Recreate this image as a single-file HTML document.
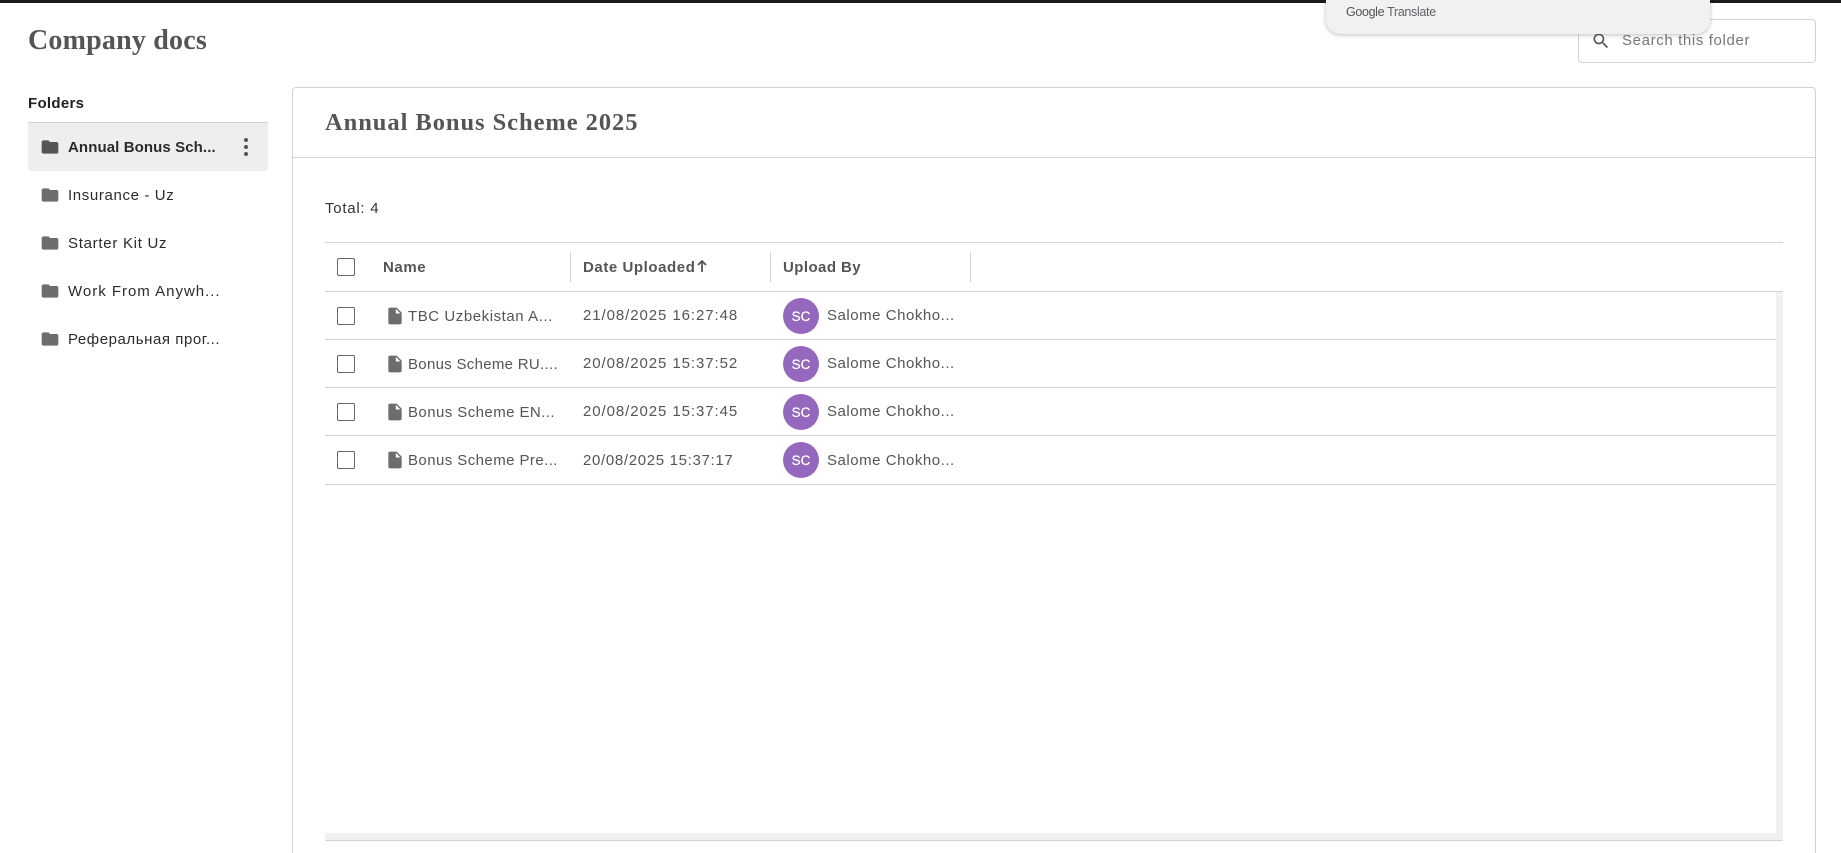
<!DOCTYPE html>
<html>
<head>
<meta charset="utf-8">
<title>Company docs</title>
<style>
html,body{margin:0;padding:0;width:1841px;height:853px;overflow:hidden;background:#fff}
body{position:relative;font-family:"Liberation Sans","Noto Sans CJK SC",sans-serif;color:#333}
.a{position:absolute}
.t{position:absolute;white-space:nowrap;line-height:20px;height:20px;font-size:15px;letter-spacing:.3px}
.s{font-family:"Liberation Serif","Noto Serif CJK SC",serif;font-weight:700;color:#555;white-space:nowrap;position:absolute}
.l{position:absolute;background:#d2d2d2;height:1px}
.v{position:absolute;background:#d2d2d2;width:1px;top:252px;height:30px}
.cb{position:absolute;left:337px;width:16px;height:16px;border:1px solid #666;border-radius:2px;background:#fff}
.f{position:absolute;left:40px;width:20px;height:20px;fill:#6d6d6d}
.fi{position:absolute;left:385px;width:20px;height:20px;fill:#6d6d6d}
.av{position:absolute;left:783px;width:36px;height:36px;border-radius:50%;background:#9368bd;color:#fff;font-size:13.5px;line-height:37px;text-align:center;-webkit-text-stroke:.25px #fff}
.fn{color:#2b2b2b;left:68px}
.c{color:#555}
.h{font-weight:700;color:#555;top:258px}
.d{position:absolute;left:244px;width:4px;height:4px;border-radius:50%;background:#555}
</style>
</head>
<body>
<div class="a" style="left:0;top:0;width:1841px;height:3px;background:#1a1a1a"></div>

<div class="s" style="left:28px;top:24px;font-size:28px;line-height:34px;letter-spacing:.2px">Company docs</div>

<!-- search -->
<div class="a" style="left:1578px;top:19px;width:236px;height:42px;border:1px solid #d2d2d2;border-radius:4px"></div>
<svg class="a" style="left:1591px;top:31px;width:20px;height:20px;fill:#555" viewBox="0 0 24 24"><path d="M15.5 14h-.79l-.28-.27A6.47 6.47 0 0 0 16 9.5 6.5 6.5 0 1 0 9.5 16c1.61 0 3.09-.59 4.23-1.57l.27.28v.79l5 4.99L20.49 19l-4.99-5zm-6 0C7.01 14 5 11.99 5 9.5S7.01 5 9.5 5 14 7.01 14 9.5 11.99 14 9.5 14z"/></svg>
<div class="t" style="left:1622px;top:31px;color:#777;letter-spacing:.63px">Search this folder</div>

<!-- translate popup -->
<div class="a" style="left:1326px;top:-20px;width:384px;height:54px;background:#f1f1f1;border-radius:0 0 14px 14px;box-shadow:0 1px 4px rgba(60,64,67,.35)"></div>
<div class="a" style="left:1346px;top:4px;height:16px;line-height:16px;font-size:12.5px;color:#5f6368;white-space:nowrap;letter-spacing:-.33px"><span style="letter-spacing:-.35px;color:#555">Google</span> <span>Translate</span></div>

<!-- sidebar -->
<div class="t" style="left:28px;top:94px;font-weight:700;color:#222;letter-spacing:.3px">Folders</div>
<div class="l" style="left:28px;top:122px;width:240px"></div>
<div class="a" style="left:28px;top:123px;width:240px;height:48px;background:#eee;border-radius:0 0 4px 4px"></div>

<svg class="f" style="top:137px;fill:#555" viewBox="0 0 24 24"><path d="M10 4H4c-1.1 0-2 .9-2 2v12c0 1.1.9 2 2 2h16c1.1 0 2-.9 2-2V8c0-1.1-.9-2-2-2h-8l-2-2z"/></svg>
<div class="t fn" style="top:138px;font-weight:700;letter-spacing:.1px">Annual Bonus Sch...</div>
<div class="d" style="top:138px"></div>
<div class="d" style="top:145px"></div>
<div class="d" style="top:152px"></div>

<svg class="f" style="top:185px" viewBox="0 0 24 24"><path d="M10 4H4c-1.1 0-2 .9-2 2v12c0 1.1.9 2 2 2h16c1.1 0 2-.9 2-2V8c0-1.1-.9-2-2-2h-8l-2-2z"/></svg>
<div class="t fn" style="top:186px;letter-spacing:.63px">Insurance - Uz</div>
<svg class="f" style="top:233px" viewBox="0 0 24 24"><path d="M10 4H4c-1.1 0-2 .9-2 2v12c0 1.1.9 2 2 2h16c1.1 0 2-.9 2-2V8c0-1.1-.9-2-2-2h-8l-2-2z"/></svg>
<div class="t fn" style="top:234px;letter-spacing:.72px">Starter Kit Uz</div>
<svg class="f" style="top:281px" viewBox="0 0 24 24"><path d="M10 4H4c-1.1 0-2 .9-2 2v12c0 1.1.9 2 2 2h16c1.1 0 2-.9 2-2V8c0-1.1-.9-2-2-2h-8l-2-2z"/></svg>
<div class="t fn" style="top:282px;letter-spacing:.99px">Work From Anywh...</div>
<svg class="f" style="top:329px" viewBox="0 0 24 24"><path d="M10 4H4c-1.1 0-2 .9-2 2v12c0 1.1.9 2 2 2h16c1.1 0 2-.9 2-2V8c0-1.1-.9-2-2-2h-8l-2-2z"/></svg>
<div class="t fn" style="top:330px;letter-spacing:.56px">Реферальная прог...</div>

<!-- panel -->
<div class="a" style="left:292px;top:87px;width:1522px;height:800px;border:1px solid #d2d2d2;border-radius:4px"></div>
<div class="l" style="left:293px;top:157px;width:1522px"></div>
<div class="s" style="left:325px;top:106px;font-size:24.5px;line-height:34px;letter-spacing:.95px">Annual Bonus Scheme 2025</div>
<div class="t" style="left:325px;top:199px;color:#333;letter-spacing:.75px">Total: 4</div>

<!-- table -->
<div class="l" style="left:325px;top:242px;width:1458px"></div>
<div class="l" style="left:325px;top:291px;width:1458px"></div>
<div class="cb" style="top:258px"></div>
<div class="t h" style="left:383px;letter-spacing:.6px">Name</div>
<div class="v" style="left:570px"></div>
<div class="t h" style="left:583px;letter-spacing:.57px">Date Uploaded</div>
<svg class="a" style="left:696px;top:259px;width:12px;height:14px" viewBox="0 0 12 14"><path d="M6 13V2M2 6l4-4 4 4" fill="none" stroke="#555" stroke-width="1.8"/></svg>
<div class="v" style="left:770px"></div>
<div class="t h" style="left:783px;letter-spacing:.43px">Upload By</div>
<div class="v" style="left:970px"></div>

<!-- scroll tracks -->
<div class="a" style="left:1776px;top:292px;width:7px;height:548px;background:#f1f1f1"></div>
<div class="a" style="left:325px;top:833px;width:1458px;height:7px;background:#f1f1f1"></div>
<div class="l" style="left:325px;top:840px;width:1458px"></div>

<!-- rows -->
<div class="cb" style="top:307px"></div>
<svg class="fi" style="top:306px" viewBox="0 0 24 24"><path d="M6 2c-1.1 0-1.99.9-1.99 2L4 20c0 1.1.89 2 1.99 2H18c1.1 0 2-.9 2-2V8l-6-6H6zm7 7V3.5L18.5 9H13z"/></svg>
<div class="t c" style="left:408px;top:307px;letter-spacing:.56px">TBC Uzbekistan A...</div>
<div class="t c" style="left:583px;top:306px;letter-spacing:.92px">21/08/2025 16:27:48</div>
<div class="av" style="top:298px">SC</div>
<div class="t c" style="left:827px;top:306px;letter-spacing:.53px">Salome Chokho...</div>
<div class="l" style="left:325px;top:339px;width:1451px"></div>

<div class="cb" style="top:355px"></div>
<svg class="fi" style="top:354px" viewBox="0 0 24 24"><path d="M6 2c-1.1 0-1.99.9-1.99 2L4 20c0 1.1.89 2 1.99 2H18c1.1 0 2-.9 2-2V8l-6-6H6zm7 7V3.5L18.5 9H13z"/></svg>
<div class="t c" style="left:408px;top:355px;letter-spacing:.3px">Bonus Scheme RU....</div>
<div class="t c" style="left:583px;top:354px;letter-spacing:.92px">20/08/2025 15:37:52</div>
<div class="av" style="top:346px">SC</div>
<div class="t c" style="left:827px;top:354px;letter-spacing:.53px">Salome Chokho...</div>
<div class="l" style="left:325px;top:387px;width:1451px"></div>

<div class="cb" style="top:403px"></div>
<svg class="fi" style="top:402px" viewBox="0 0 24 24"><path d="M6 2c-1.1 0-1.99.9-1.99 2L4 20c0 1.1.89 2 1.99 2H18c1.1 0 2-.9 2-2V8l-6-6H6zm7 7V3.5L18.5 9H13z"/></svg>
<div class="t c" style="left:408px;top:403px;letter-spacing:.43px">Bonus Scheme EN...</div>
<div class="t c" style="left:583px;top:402px;letter-spacing:.92px">20/08/2025 15:37:45</div>
<div class="av" style="top:394px">SC</div>
<div class="t c" style="left:827px;top:402px;letter-spacing:.53px">Salome Chokho...</div>
<div class="l" style="left:325px;top:435px;width:1451px"></div>

<div class="cb" style="top:451px"></div>
<svg class="fi" style="top:450px" viewBox="0 0 24 24"><path d="M6 2c-1.1 0-1.99.9-1.99 2L4 20c0 1.1.89 2 1.99 2H18c1.1 0 2-.9 2-2V8l-6-6H6zm7 7V3.5L18.5 9H13z"/></svg>
<div class="t c" style="left:408px;top:451px;letter-spacing:.43px">Bonus Scheme Pre...</div>
<div class="t c" style="left:583px;top:451px;letter-spacing:.67px">20/08/2025 15:37:17</div>
<div class="av" style="top:442px">SC</div>
<div class="t c" style="left:827px;top:451px;letter-spacing:.53px">Salome Chokho...</div>
<div class="l" style="left:325px;top:484px;width:1451px"></div>
</body>
</html>
